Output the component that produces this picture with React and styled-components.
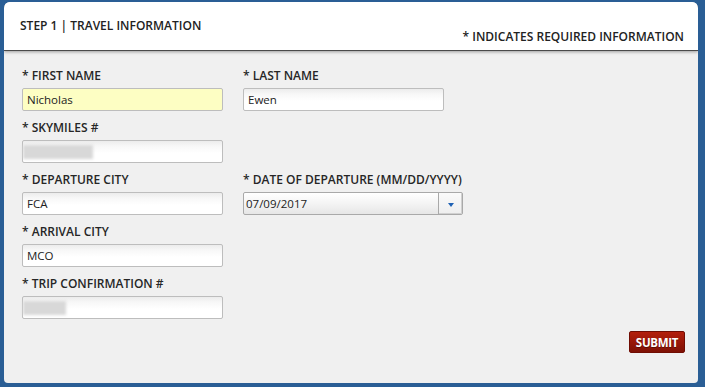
import React from "react";
import styled, { createGlobalStyle } from "styled-components";

const Global = createGlobalStyle`
  html, body { margin: 0; padding: 0; }
  body {
    background: #2a5e95;
    font-family: "Open Sans", "Liberation Sans", sans-serif;
    width: 705px;
    height: 387px;
    overflow: hidden;
  }
`;

const Page = styled.div`
  padding: 2px 7px 4px 4px;
  height: 387px;
  box-sizing: border-box;
`;

const Panel = styled.div`
  height: 381px;
  border-radius: 6px 6px 4px 4px;
  overflow: hidden;
  background: #f0f0f0;
  display: flex;
  flex-direction: column;
`;

const Header = styled.div`
  position: relative;
  height: 48px;
  background: #fff;
  box-shadow: 0 1px 0 #4a4a4a, 0 2px 3px rgba(0,0,0,0.35);
  display: flex;
  justify-content: space-between;
  padding: 0 14px 0 16px;
  z-index: 1;
`;

const Title = styled.div`
  font-size: 12px;
  font-weight: 600;
  color: #222;
  padding-top: 15px;
`;

const Required = styled.div`
  font-size: 12px;
  font-weight: 600;
  color: #222;
  align-self: flex-end;
  padding-bottom: 5px;
`;

const Body = styled.div`
  flex: 1;
  padding: 18px 13px 0 18px;
  display: flex;
  flex-direction: column;
`;

const Grid = styled.div`
  display: grid;
  grid-template-columns: 201px 220px;
  column-gap: 20px;
  row-gap: 9px;
`;

const FieldWrap = styled.div`
  display: flex;
  flex-direction: column;
`;

const Label = styled.div`
  font-size: 12px;
  font-weight: 600;
  color: #262626;
  line-height: 16px;
  margin-bottom: 4px;
  white-space: nowrap;
`;

const Box = styled.div`
  width: ${(p) => p.$w || 201}px;
  height: 23px;
  box-sizing: border-box;
  border: 1px solid #bdbdbd;
  border-radius: 2px;
  background: ${(p) =>
    p.$filled
      ? "#fdfec3"
      : "linear-gradient(180deg, #ececec 0px, #f7f7f7 5px, #ffffff 12px)"};
  font-size: 11.5px;
  color: #222;
  display: flex;
  align-items: center;
  padding-left: 4px;
`;

const Blur = styled.span`
  display: block;
  width: ${(p) => p.$w}px;
  height: 14px;
  margin-left: -4px;
  background: #d8d8d8;
  filter: blur(1.5px);
`;

const Select = styled.div`
  width: 220px;
  height: 23px;
  box-sizing: border-box;
  border: 1px solid #a9a9a9;
  border-radius: 2px;
  background: linear-gradient(180deg, #ffffff 0%, #f4f4f4 50%, #e6e6e6 100%);
  display: flex;
  font-size: 11.5px;
  color: #222;
`;

const SelectText = styled.div`
  flex: 1;
  display: flex;
  align-items: center;
  padding-left: 2px;
`;

const SelectButton = styled.div`
  width: 23px;
  border-left: 1px solid #a9a9a9;
  display: flex;
  align-items: center;
  justify-content: center;
  background: linear-gradient(180deg, #fafafa 0%, #eeeeee 100%);
  box-shadow: inset -1px -1px 0 #d0d0d0;
`;

const Arrow = styled.span`
  width: 0;
  height: 0;
  border-left: 3.5px solid transparent;
  border-right: 3.5px solid transparent;
  border-top: 4px solid #1f62b5;
  margin-top: 2px;
`;

const Footer = styled.div`
  display: flex;
  justify-content: flex-end;
  margin-top: 12px;
`;

const Submit = styled.button`
  width: 56px;
  height: 22px;
  padding: 0;
  border: 1px solid #700d03;
  border-radius: 2px;
  background: linear-gradient(180deg, #b31f0c 0%, #7e1105 100%);
  color: #fff;
  font-family: "Open Sans", "Liberation Sans", sans-serif;
  font-weight: 700;
  font-size: 11.5px;
  letter-spacing: -0.3px;
  text-shadow: 0 1px 0 rgba(0,0,0,0.35);
`;

const Field = ({ label, children }) => (
  <FieldWrap>
    <Label>{label}</Label>
    {children}
  </FieldWrap>
);

export default function App() {
  return (
    <>
      <Global />
      <Page>
        <Panel>
          <Header>
            <Title>STEP 1 | TRAVEL INFORMATION</Title>
            <Required>* INDICATES REQUIRED INFORMATION</Required>
          </Header>
          <Body>
            <Grid>
              <Field label="* FIRST NAME">
                <Box $filled>Nicholas</Box>
              </Field>
              <Field label="* LAST NAME">
                <Box>Ewen</Box>
              </Field>
              <Field label="* SKYMILES #">
                <Box>
                  <Blur $w={70} />
                </Box>
              </Field>
              <div />
              <Field label="* DEPARTURE CITY">
                <Box>FCA</Box>
              </Field>
              <Field label="* DATE OF DEPARTURE (MM/DD/YYYY)">
                <Select>
                  <SelectText>07/09/2017</SelectText>
                  <SelectButton>
                    <Arrow />
                  </SelectButton>
                </Select>
              </Field>
              <Field label="* ARRIVAL CITY">
                <Box>MCO</Box>
              </Field>
              <div />
              <Field label="* TRIP CONFIRMATION #">
                <Box>
                  <Blur $w={43} />
                </Box>
              </Field>
              <div />
            </Grid>
            <Footer>
              <Submit>SUBMIT</Submit>
            </Footer>
          </Body>
        </Panel>
      </Page>
    </>
  );
}
